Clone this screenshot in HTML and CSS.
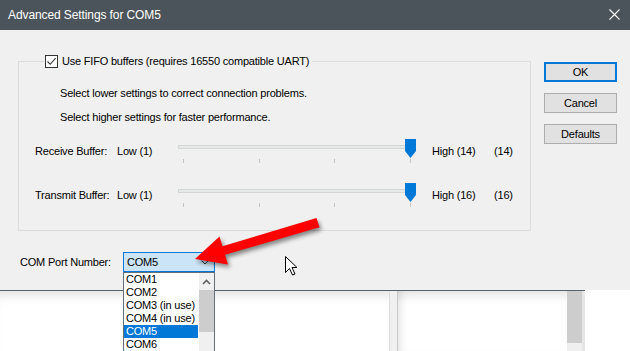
FILE: index.html
```html
<!DOCTYPE html>
<html lang="en">
<head>
  <meta charset="UTF-8">
  <title>Advanced Settings for COM5</title>
  <link rel="stylesheet" href="styles.css">
</head>
<body>

  <div class="screen">
    <div class="dialog">
      <div class="titlebar">
        <span class="title">Advanced Settings for COM5</span>
        <svg class="close" width="11" height="11" viewBox="0 0 11 11">
          <path d="M0.5 0.5 L10.5 10.5 M10.5 0.5 L0.5 10.5" stroke="#fff" stroke-width="1.1"/>
        </svg>
      </div>

      <div class="client">
        <div class="main">
          <fieldset class="group">
            <legend class="group-title">
              <span class="check">
                <svg width="11" height="11" viewBox="0 0 11 11">
                  <path d="M1.5 5.5 L4.2 8.3 L9.6 2.2" fill="none" stroke="#333" stroke-width="1.1"/>
                </svg>
              </span>
              Use FIFO buffers (requires 16550 compatible UART)
            </legend>

            <p class="hint first">Select lower settings to correct connection problems.</p>
            <p class="hint">Select higher settings for faster performance.</p>

            <div class="slider-row">
              <span class="name">Receive Buffer:</span>
              <span class="low">Low (1)</span>
              <div class="slider">
                <div class="track"></div>
                <div class="ticks"><i></i><i></i><i></i><i></i></div>
                <svg class="thumb" width="11" height="19" viewBox="0 0 11 19">
                  <polygon points="0,0 11,0 11,12 5.5,19 0,12" fill="#0078d7"/>
                </svg>
              </div>
              <span class="high">High (14)</span>
              <span class="value">(14)</span>
            </div>

            <div class="slider-row second">
              <span class="name">Transmit Buffer:</span>
              <span class="low">Low (1)</span>
              <div class="slider">
                <div class="track"></div>
                <div class="ticks"><i></i><i></i><i></i><i></i></div>
                <svg class="thumb" width="11" height="19" viewBox="0 0 11 19">
                  <polygon points="0,0 11,0 11,12 5.5,19 0,12" fill="#0078d7"/>
                </svg>
              </div>
              <span class="high">High (16)</span>
              <span class="value">(16)</span>
            </div>
          </fieldset>

          <div class="port-row">
            <span class="port-label">COM Port Number:</span>
            <div class="combo">
              <span class="combo-text">COM5</span>
              <svg class="combo-chev" width="8" height="5" viewBox="0 0 8 5">
                <path d="M0.5 0.5 L4 4 L7.5 0.5" fill="none" stroke="#333" stroke-width="1"/>
              </svg>

              <div class="list">
                <ul class="items">
                  <li>COM1</li>
                  <li>COM2</li>
                  <li>COM3 (in use)</li>
                  <li>COM4 (in use)</li>
                  <li class="selected">COM5</li>
                  <li>COM6</li>
                </ul>
                <div class="scrollbar">
                  <div class="scroll-up">
                    <svg width="9" height="6" viewBox="0 0 9 6">
                      <path d="M1 5 L4.5 1.5 L8 5" fill="none" stroke="#606060" stroke-width="1.6"/>
                    </svg>
                  </div>
                  <div class="scroll-thumb"></div>
                </div>
              </div>
            </div>
          </div>
        </div>

        <div class="buttons">
          <button class="btn default">OK</button>
          <button class="btn">Cancel</button>
          <button class="btn">Defaults</button>
        </div>
      </div>
    </div>

    <!-- window underneath the dialog -->
    <div class="behind">
      <div class="behind-window">
        <div class="pane pane-left"></div>
        <div class="strip"></div>
        <div class="pane pane-main"></div>
        <div class="vscroll"><div class="vscroll-thumb"></div></div>
        <div class="edge"></div>
      </div>
    </div>

    <!-- annotation: red arrow and mouse pointer -->
    <svg class="overlay" width="630" height="351" viewBox="0 0 630 351">
      <polygon class="red-arrow"
        points="195,259 219.5,236.5 222.5,246.2 316.5,218 319.5,227.2 225.1,254.8 228,264.5"
        fill="#ff0000"/>
      <path d="M285.5 256.5 L285.5 272.5 L289.5 268.5 L292.5 275 L295 274 L292 267.5 L297 267.5 Z"
        fill="#fff" stroke="#000" stroke-width="1" stroke-linejoin="miter"/>
    </svg>
  </div>

</body>
</html>
```

FILE: styles.css
```css
body {
  margin: 0;
  font-family: "Liberation Sans", Arial, sans-serif;
  font-size: 11px;
  letter-spacing: -0.2px;
  color: #000;
  background: #fff;
  overflow: hidden;
}

.screen {
  position: relative;
  width: 630px;
  height: 351px;
  overflow: hidden;
}

.dialog {
  height: 290px;
  background: #f0f0f0;
}

.titlebar {
  height: 30px;
  background: #4b545a;
  display: flex;
  align-items: center;
  justify-content: space-between;
  padding: 0 10px 0 8px;
}

.title {
  color: #fff;
  font-size: 12px;
  letter-spacing: -0.1px;
}

.close {
  display: block;
  margin-top: -1px;
}

.client {
  display: flex;
  padding: 24px 0 0 18px;
}

.main {
  width: 513px;
}

/* group box */
.group {
  margin: 0;
  padding: 0 0 23px 16px;
  border: 1px solid #dcdcdc;
  min-width: 0;
}

.group-title {
  display: flex;
  align-items: center;
  height: 14px;
  margin-left: 9px;
  padding: 0 3px 0 1px;
}

.check {
  width: 11px;
  height: 11px;
  border: 1px solid #333;
  background: #fff;
  margin-right: 4px;
  display: flex;
}

.hint {
  margin: 9px 0 0 0;
  padding-left: 25px;
  line-height: 15px;
}

.hint.first {
  margin-top: 18px;
}

.slider-row {
  display: flex;
  align-items: center;
  height: 24px;
  margin-top: 14px;
}

.slider-row.second {
  margin-top: 20px;
}

.name {
  width: 82px;
}

.low {
  width: 61px;
}

.slider {
  position: relative;
  width: 238px;
  height: 24px;
}

.track {
  margin-top: 6px;
  height: 2px;
  border: 1px solid #d6d6d6;
  background: #e7eaea;
}

.ticks {
  display: flex;
  justify-content: space-between;
  padding: 0 5px;
  margin-top: 10px;
}

.ticks i {
  width: 1px;
  height: 4px;
  background: #c4c4c4;
}

.thumb {
  position: absolute;
  top: 0;
  right: 0;
}

.high {
  width: 62px;
  margin-left: 16px;
}

/* COM port combo */
.port-row {
  display: flex;
  align-items: center;
  margin-top: 21px;
  padding-left: 2px;
}

.port-label {
  width: 103px;
}

.combo {
  position: relative;
  box-sizing: border-box;
  width: 92px;
  height: 20px;
  border: 1px solid #0078d7;
  background: #cce4f7;
  display: flex;
  align-items: center;
  justify-content: space-between;
  padding: 0 5px 0 3px;
}

.list {
  position: absolute;
  top: 19px;
  left: -1px;
  width: 92px;
  height: 90px;
  box-sizing: border-box;
  border: 1px solid #646e78;
  background: #fff;
  display: flex;
  z-index: 2;
}

.items {
  list-style: none;
  margin: 0;
  padding: 0;
  width: 75px;
}

.items li {
  height: 13px;
  line-height: 13px;
  padding-left: 2px;
  white-space: nowrap;
}

.items li.selected {
  background: #0078d7;
  color: #fff;
}

.scrollbar {
  width: 15px;
  margin-left: 1px;
  background: #f0f0f0;
}

.scroll-up {
  height: 17px;
  display: flex;
  align-items: center;
  justify-content: center;
}

.scroll-up svg {
  display: block;
}

.scroll-thumb {
  height: 42px;
  background: #cdcdcd;
}

/* buttons */
.buttons {
  display: flex;
  flex-direction: column;
  gap: 11px;
  margin-left: 13px;
  padding-top: 8px;
}

.btn {
  box-sizing: border-box;
  width: 73px;
  height: 20px;
  padding: 0;
  font-family: inherit;
  font-size: 11px;
  letter-spacing: -0.2px;
  color: #000;
  background: #e1e1e1;
  border: 1px solid #adadad;
}

.btn.default {
  border: 2px solid #0078d7;
}

/* the window that sits under the dialog */
.behind {
  height: 61px;
}

.behind-window {
  width: 585px;
  height: 60px;
  border-top: 1px solid #56636a;
  display: flex;
  background: #fff;
  box-shadow: inset 0 12px 12px -8px rgba(0, 0, 0, 0.12);
}

.pane-left {
  width: 389px;
}

.strip {
  box-sizing: border-box;
  width: 9px;
  background: #f0f0f0;
  border-left: 1px solid #dcdcdc;
  border-right: 1px solid #c8c8c8;
}

.pane-main {
  width: 169px;
  box-shadow: inset 8px 0 8px -6px rgba(0, 0, 0, 0.12);
}

.vscroll {
  width: 15px;
  background: #efefef;
}

.vscroll-thumb {
  height: 52px;
  background: #cdcdcd;
}

.edge {
  width: 3px;
  background: #e6e6e6;
}

/* annotation layer */
.overlay {
  position: absolute;
  top: 0;
  left: 0;
  pointer-events: none;
  z-index: 3;
}

.red-arrow {
  filter: drop-shadow(2px 3px 2px rgba(0, 0, 0, 0.45));
}
```
